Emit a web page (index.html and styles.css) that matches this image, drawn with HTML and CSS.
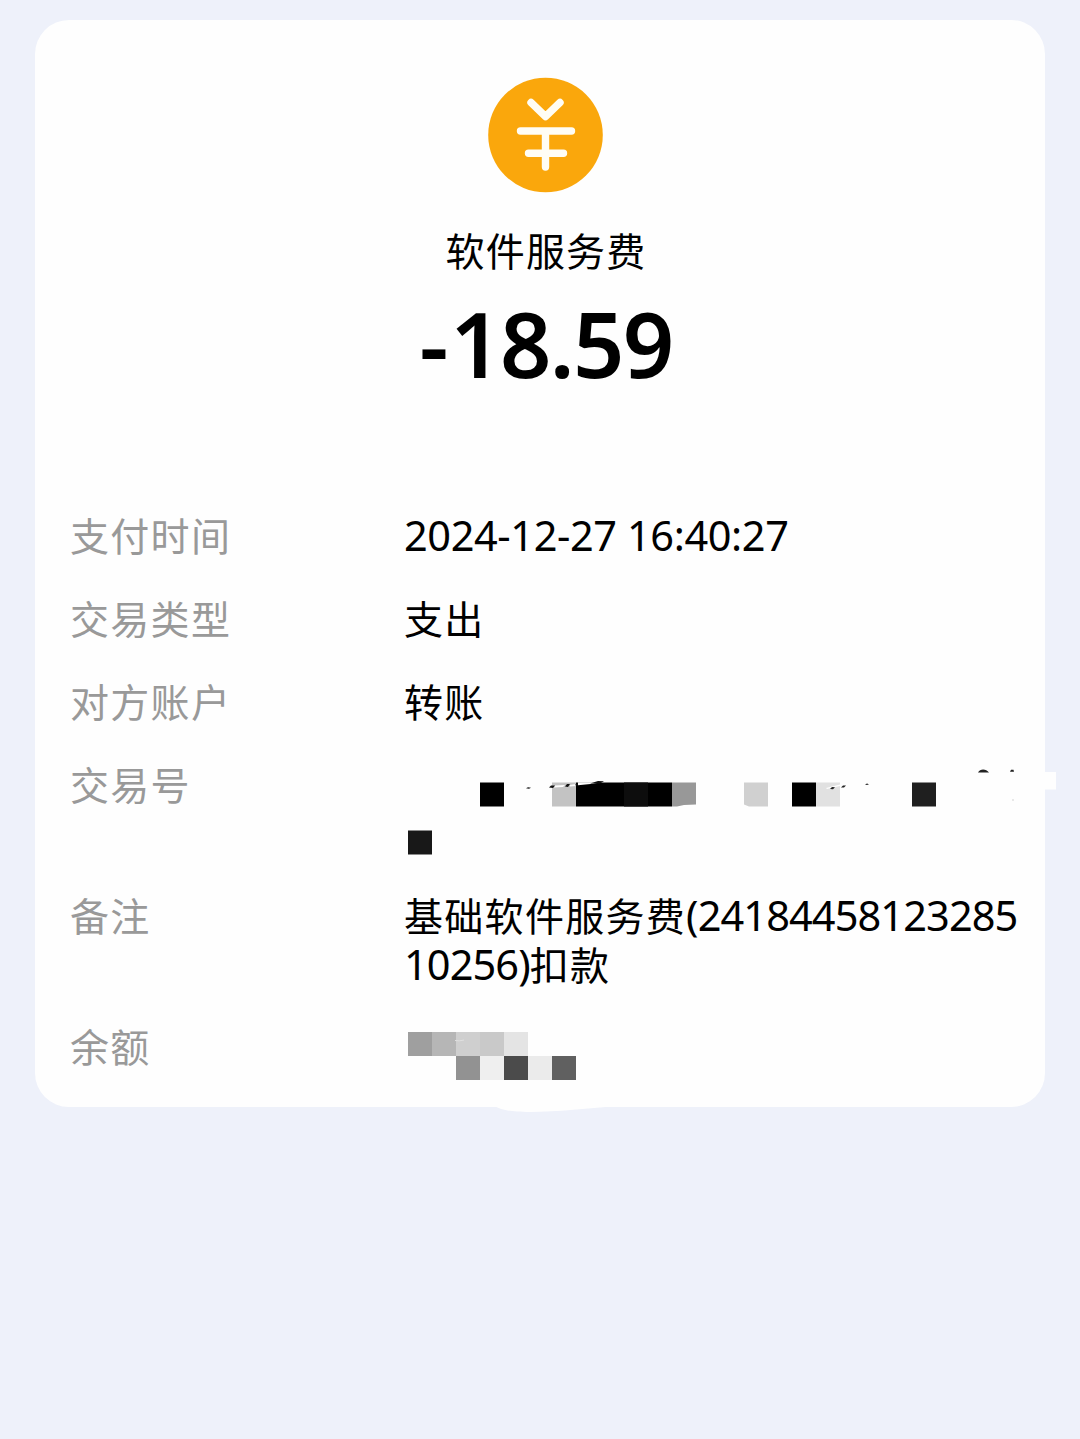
FILE: index.html
```html
<!DOCTYPE html>
<html lang="zh-CN">
<head>
    <meta charset="UTF-8">
    <meta name="viewport" content="width=device-width, initial-scale=1.0">
    <title>账单详情</title>
    <link rel="stylesheet" href="styles.css">
</head>
<body>
    <div class="card">
        <!-- 金额 -->
        <div class="summary">
            <svg class="icon" viewBox="0 0 116 116">
                <circle cx="57.5" cy="58" r="57.3" fill="#faa70c"/>
                <path d="M43 25.5L57.500 39.5L72 25.5M32.500 54H83.500M57.500 54V90M40.500 76.300H75.500" fill="none" stroke="#fffdf5" stroke-width="7.4" stroke-linecap="round" stroke-linejoin="round"/>
            </svg>
            <div class="title">软件服务费</div>
            <div class="amount"><span class="minus">-</span>18.59</div>
        </div>

        <!-- 明细 -->
        <div class="details">
            <div class="row">
                <div class="label">支付时间</div>
                <div class="value"><span class="num date">2024-12-27 16:40:27</span></div>
            </div>
            <div class="row">
                <div class="label">交易类型</div>
                <div class="value">支出</div>
            </div>
            <div class="row">
                <div class="label">对方账户</div>
                <div class="value">转账</div>
            </div>
            <div class="row">
                <div class="label">交易号</div>
                <div class="value">
                    <!-- 打码 -->
                    <svg class="mask mask-number" viewBox="404 759 616 97">
                        <path d="M1030 772H1056V789.500H1030Z" fill="#fefefe"/>
                        <path d="M480 782.500h24v24h-24zM576 782.500h96v24h-96zM792 782.500h24v24h-24z" fill="#000"/>
                        <path d="M624 782.500h24v24h-24z" fill="#0d0d0d"/>
                        <path d="M552 782.500h24v24h-24z" fill="#c3c3c3"/>
                        <path d="M672 782.500h24v22l-12 .5-7 1.500h-5z" fill="#989898"/>
                        <path d="M744 782.500h24v24h-19l-5-2z" fill="#d0d0d0"/>
                        <path d="M816 782.500h24v24h-24z" fill="#e1e1e1"/>
                        <path d="M912 782.500h24v24h-24z" fill="#1f1f1f"/>
                        <path d="M408 830.500h24v24h-24z" fill="#181818"/>
                        <path d="M555 785.500l10-.5-2 2-9 .5zM570 785l6-1v2l-6 .5zM578 782.300h23l-8 1.500-15 1.500zM826 788l14-3.500v1.500l-13 3z" fill="#fefefe"/>
                        <path d="M549 787.500l2-2h4l-2 2.500zM565 786.500l2-2.500h3l-2 3zM575 785l2-2 1 1-1 2zM590 783.500l8-2.500 6 .3-4 2.200zM526 788.300l2-1 3 .5-2 1z" fill="#111"/>
                        <path d="M830 789l2-2 3 .3-2 2zM841 787.500l2-1.900h3l-2 2zM865 784.500l2-1 2 .8-2 .7zM978 772.500c2-4 8-4 11 0zM1010 771.800l1-2h2.500l.5 2z" fill="#222"/>
                        <path d="M1012 799h2v2h-2z" fill="#e8e8e8"/>
                    </svg>
                </div>
            </div>
            <div class="row">
                <div class="label">备注</div>
                <div class="value">基础软件服务费<span class="num">(24184458123285<br>10256)</span>扣款</div>
            </div>
            <div class="row">
                <div class="label">余额</div>
                <div class="value">
                    <svg class="mask mask-balance" viewBox="404 1021 616 58">
                        <path d="M408 1032h24v24h-24z" fill="#9f9f9f"/>
                        <path d="M432 1032h24v24h-24z" fill="#b6b6b6"/>
                        <path d="M456 1032h24v24h-24z" fill="#cfcfcf"/>
                        <path d="M480 1032h24v24h-24z" fill="#c9c9c9"/>
                        <path d="M504 1032h24v24h-24z" fill="#e4e4e4"/>
                        <path d="M456 1056h24v24h-24z" fill="#929292"/>
                        <path d="M480 1056h24v24h-24z" fill="#efefef"/>
                        <path d="M504 1056h24v24h-24z" fill="#4b4b4b"/>
                        <path d="M528 1056h24v24h-24z" fill="#ebebeb"/>
                        <path d="M552 1056h24v24h-24z" fill="#606060"/>
                        <path d="M455 1040.500q4 1 9-.5" fill="none" stroke="#e0e0e0"/>
                        <path d="M494 1106C502 1110 510 1112 530 1112C556 1112 590 1108 620 1106Z" fill="#fefefe"/>
                    </svg>
                </div>
            </div>
        </div>
    </div>
</body>
</html>
```
FILE: styles.css
```css
body {
    margin: 0;
    padding: 20px 35px;
    background-color: #eef1fa;
    font-family: "Noto Sans CJK SC", sans-serif;
    color: #000;
}
.card {
    height: 1087px;
    padding: 57px 25px 0 35px;
    box-sizing: border-box;
    background: #fefefe;
    border-radius: 34px;
}
.summary {
    display: flex;
    flex-direction: column;
    align-items: center;
    padding-left: 2px;
}
.icon {
    width: 116px;
    height: 116px;
}
.title {
    margin-top: 27px;
    font-size: 39px;
    line-height: 58px;
    letter-spacing: 1.2px;
}
.amount {
    margin-top: 16px;
    font-family: "Noto Sans", sans-serif;
    font-size: 90px;
    font-weight: 600;
    line-height: 98px;
    letter-spacing: -1.7px;
    white-space: nowrap;
}
.minus {
    letter-spacing: 2px;
}
.details {
    display: flex;
    flex-direction: column;
    gap: 34.4px;
    margin-top: 118px;
}
.row {
    display: flex;
    font-size: 39px;
    line-height: 48.5px;
    letter-spacing: 1.3px;
}
.label {
    width: 334px;
    flex-shrink: 0;
    color: #999;
}
.value {
    width: 616px;
    flex-shrink: 0;
    white-space: nowrap;
}
.num {
    font-family: "Noto Sans", sans-serif;
    font-size: 41.5px;
    line-height: 1;
    letter-spacing: -0.9px;
}
.date {
    letter-spacing: -0.4px;
}
.mask {
    display: block;
    width: 616px;
    overflow: visible;
}
.mask-number {
    height: 97px;
}
.mask-balance {
    height: 58px;
}
```
